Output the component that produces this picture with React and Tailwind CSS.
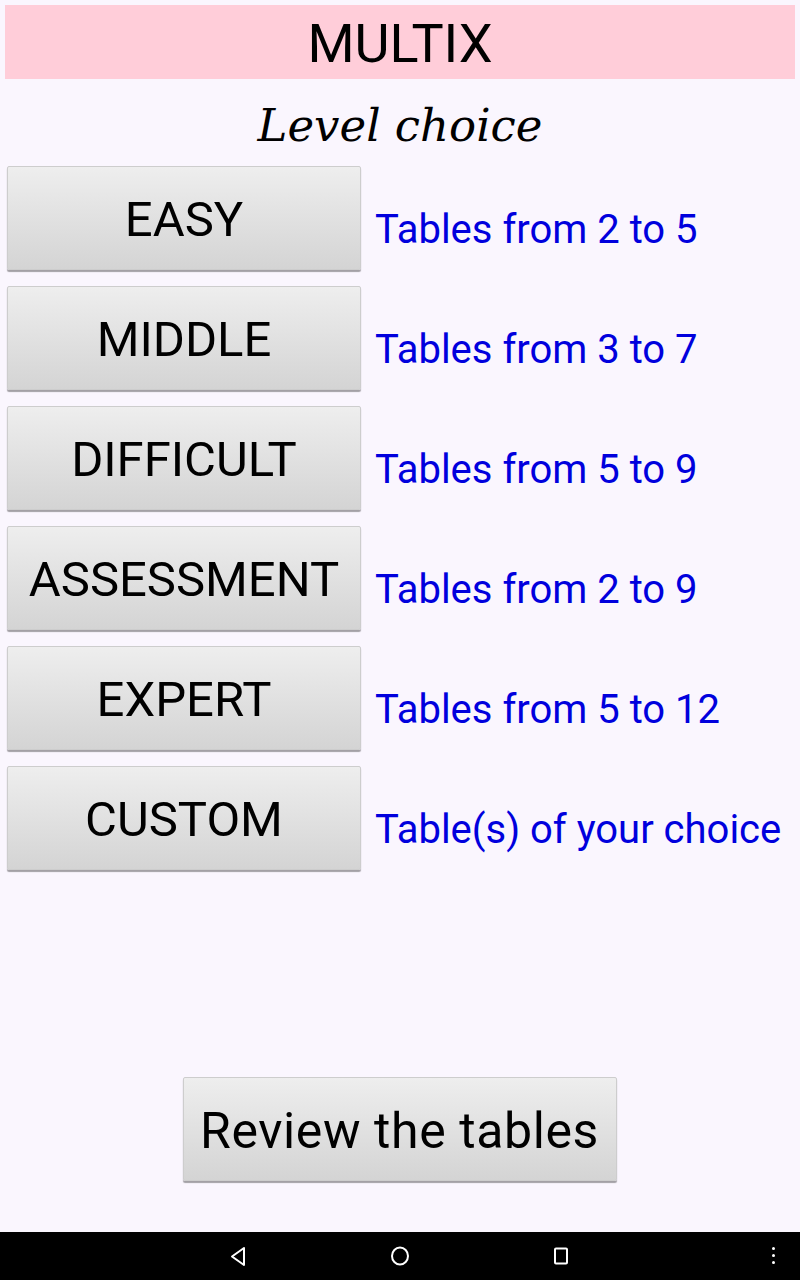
import React from "react";

const rows = [
  ["EASY", "Tables from 2 to 5"],
  ["MIDDLE", "Tables from 3 to 7"],
  ["DIFFICULT", "Tables from 5 to 9"],
  ["ASSESSMENT", "Tables from 2 to 9"],
  ["EXPERT", "Tables from 5 to 12"],
  ["CUSTOM", "Table(s) of your choice"],
];

function Btn({ children, className = "" }) {
  return (
    <div
      className={
        "flex items-center justify-center rounded-[2px] border border-[#cdcdcd] bg-gradient-to-b from-[#eeeeee] to-[#d4d4d4] shadow-[0_2px_1px_rgba(0,0,0,0.35)] text-black leading-none " +
        className
      }
    >
      {children}
    </div>
  );
}

export default function App() {
  return (
    <div
      className="h-[1280px] w-[800px] flex flex-col bg-[#faf6fe] overflow-hidden"
      style={{ fontFamily: "Roboto, 'Liberation Sans', sans-serif" }}
    >
      <div className="mx-[5px] mt-[5px] h-[74px] bg-[#ffcdd9] flex items-center justify-center">
        <span className="text-[54px] leading-none text-black pt-[3px]">MULTIX</span>
      </div>
      <div className="h-[87px] flex items-center justify-center pt-[5px]">
        <span
          className="italic text-[45px] leading-none text-black"
          style={{ fontFamily: "'DejaVu Serif', 'Liberation Serif', serif" }}
        >
          Level choice
        </span>
      </div>
      <div className="flex flex-col gap-4 pl-[7px]">
        {rows.map(([b, t]) => (
          <div key={b} className="flex items-center">
            <Btn className="w-[354px] h-[104px] text-[49px] pt-[3px]">{b}</Btn>
            <span className="ml-[14px] pt-6 text-[40px] leading-none text-[#0000dd] whitespace-nowrap">
              {t}
            </span>
          </div>
        ))}
      </div>
      <div className="mt-auto mb-[51px] flex justify-center">
        <Btn className="w-[434px] h-[104px] mr-[1px] text-[50px] tracking-[0.6px] pt-[3px]">Review the tables</Btn>
      </div>
      <div className="h-[48px] bg-black relative flex items-center">
        <svg className="absolute left-[229px] top-[14px]" width="18" height="21" viewBox="0 0 18 21">
          <path d="M15 2 L3 10.5 L15 19 Z" fill="none" stroke="white" strokeWidth="2" strokeLinejoin="round" />
        </svg>
        <svg className="absolute left-[390px] top-[14px]" width="20" height="20" viewBox="0 0 20 20">
          <ellipse cx="10" cy="10" rx="8" ry="8.5" fill="none" stroke="white" strokeWidth="2" />
        </svg>
        <svg className="absolute left-[553px] top-[15px]" width="16" height="18" viewBox="0 0 16 18">
          <rect x="2" y="1.5" width="12" height="15" rx="1" fill="none" stroke="white" strokeWidth="2" />
        </svg>
        <div className="absolute left-[772px] top-[15px] flex flex-col gap-[4px]">
          <div className="w-[3px] h-[3px] bg-white rounded-full" />
          <div className="w-[3px] h-[3px] bg-white rounded-full" />
          <div className="w-[3px] h-[3px] bg-white rounded-full" />
        </div>
      </div>
    </div>
  );
}
